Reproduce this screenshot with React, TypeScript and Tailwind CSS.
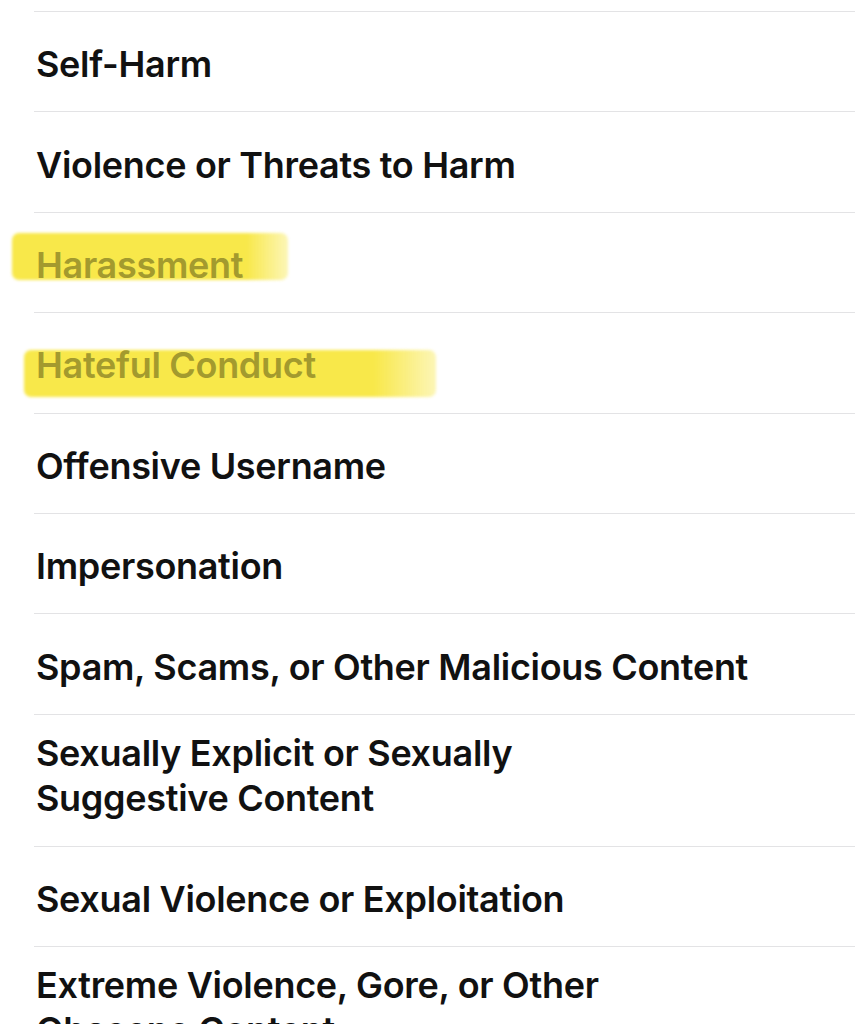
const items = [
  { lines: ['Self-Harm'] },
  { lines: ['Violence or Threats to Harm'] },
  { lines: ['Harassment'], mark: 'w-[276px] left-[-22px] top-[20px] h-[47px]' },
  { lines: ['Hateful Conduct'], mark: 'w-[412px] left-[-10px] top-[37px] h-[47px]' },
  { lines: ['Offensive Username'] },
  { lines: ['Impersonation'] },
  { lines: ['Spam, Scams, or Other Malicious Content'] },
  { lines: ['Sexually Explicit or Sexually', 'Suggestive Content'] },
  { lines: ['Sexual Violence or Exploitation'] },
  { lines: ['Extreme Violence, Gore, or Other', 'Obscene Content'] },
];

export default function App() {
  return (
    <div
      className="h-[1024px] w-[855px] overflow-hidden bg-white pt-[11px] pl-[34px]"
      style={{ fontFamily: 'Inter, "Noto Sans", sans-serif' }}
    >
      {items.map((item) => (
        <div
          key={item.lines[0]}
          className={`relative flex min-h-[100.4px] items-center border-t-[1.5px] border-[#e3e3e5] pl-[2px] ${
            item.lines.length > 1 ? 'pt-[16px] pb-[25px]' : 'pt-[23.5px] pb-[17.5px]'
          }`}
        >
          {item.mark && (
            <div
              className={`absolute rounded-[7px] bg-gradient-to-r from-[#f8e84a] via-[#f8e84a] via-85% to-[#f8e84a]/40 blur-[1.5px] ${item.mark}`}
            />
          )}
          <div
            className={`relative whitespace-nowrap text-[36px] leading-[45px] font-semibold tracking-[-0.3px] ${
              item.mark ? 'text-[#a39a2e]' : 'text-[#111111]'
            }`}
          >
            {item.lines.map((line) => (
              <div key={line}>{line}</div>
            ))}
          </div>
        </div>
      ))}
    </div>
  );
}
